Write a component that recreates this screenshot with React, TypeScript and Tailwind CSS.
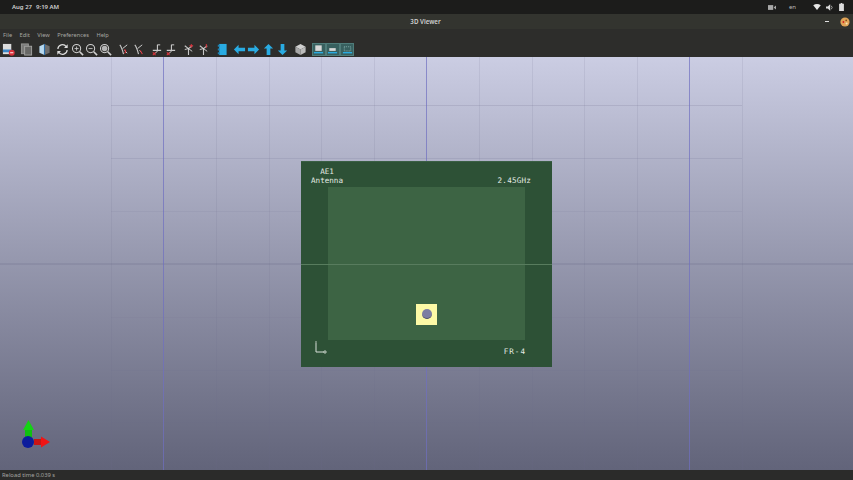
const ROT = (a: string, b: string, red: string) => (
  <>
    <path d={a} stroke="#c8c8c8" strokeWidth="1.2" fill="none" />
    <path d={b} stroke="#e8e8e8" strokeWidth="0.9" fill="none" />
    <path d={red} stroke="#d8303a" strokeWidth="1.1" fill="none" />
  </>
);

function Svg({ children }: { children: React.ReactNode }) {
  return (
    <svg viewBox="0 0 14 14" className="w-[13px] h-[13px]" fill="none">
      {children}
    </svg>
  );
}

const Mag = ({ sign }: { sign: string }) => (
  <Svg>
    <circle cx="6" cy="6" r="4.4" stroke="#d0d0d0" strokeWidth="1.1" />
    <path d="M9.4 9.4L13 13" stroke="#d0d0d0" strokeWidth="1.7" />
    {sign === "fit" ? <circle cx="6" cy="6" r="3" fill="#b5b5b5" /> : null}
    {sign !== "fit" ? <path d="M3.8 6h4.4" stroke="#d0d0d0" strokeWidth="0.9" /> : null}
    {sign === "+" ? <path d="M6 3.8v4.4" stroke="#d0d0d0" strokeWidth="0.9" /> : null}
  </Svg>
);

const Arrow = ({ d }: { d: string }) => (
  <Svg>
    <path d={d} fill="#29abe2" />
  </Svg>
);

const ViewIcon = ({ children }: { children: React.ReactNode }) => (
  <div className="w-[14.3px] h-[13px] bg-[#38605f] border border-[#4f7c7a] flex items-center justify-center shrink-0">
    <svg viewBox="0 0 12 12" className="w-[11px] h-[11px]" fill="none">
      {children}
    </svg>
  </div>
);

function Item({ children }: { children: React.ReactNode }) {
  return <div className="w-[14.3px] h-[14px] flex items-center justify-center shrink-0">{children}</div>;
}

function Group({ children }: { children: React.ReactNode }) {
  return <div className="flex items-center">{children}</div>;
}

function Toolbar() {
  return (
    <div className="h-[15px] bg-[#2d2d2b] flex items-center gap-[3.9px] pl-[1px] pb-[1px]">
      <Group>
        <Item>
          <Svg>
            <rect x="1" y="1" width="9" height="11" fill="#dcdcdc" />
            <rect x="1" y="7" width="9" height="3" fill="#3a86c8" />
            <circle cx="10.5" cy="10.5" r="3.2" fill="#d8303a" />
            <path d="M8.8 10.5h3.4" stroke="#fff" strokeWidth="1" />
          </Svg>
        </Item>
      </Group>
      <Group>
        <Item>
          <Svg>
            <rect x="1.5" y="1" width="7.5" height="10.5" fill="#7a7a78" stroke="#989896" />
            <rect x="5" y="3.5" width="7.5" height="9.5" fill="#686866" stroke="#a4a4a2" />
          </Svg>
        </Item>
      </Group>
      <Group>
        <Item>
          <Svg>
            <path d="M7 1L1.5 3.5v7L7 13z" fill="#b8d8ee" />
            <path d="M7 1l5.5 2.5v7L7 13z" fill="#6d6d6d" />
            <path d="M7 1v12" stroke="#2c6ca8" strokeWidth="1.2" />
          </Svg>
        </Item>
      </Group>
      <Group>
        <Item>
          <Svg>
            <path d="M2 6.5A5 5 0 0 1 11 3.8" stroke="#dcdcdc" strokeWidth="1.3" />
            <path d="M12.6 1.4v4h-4z" fill="#dcdcdc" />
            <path d="M12 7.5A5 5 0 0 1 3 10.2" stroke="#dcdcdc" strokeWidth="1.3" />
            <path d="M1.4 12.6v-4h4z" fill="#dcdcdc" />
          </Svg>
        </Item>
        <Item><Mag sign="+" /></Item>
        <Item><Mag sign="-" /></Item>
        <Item><Mag sign="fit" /></Item>
      </Group>
      <Group>
        <Item>
          <Svg>{ROT("M3 2c2 2 3 6 4 10", "M6 6l5-4M8 8l3 3", "M8 7c2 1 2 3 0 4")}</Svg>
        </Item>
        <Item>
          <Svg>{ROT("M3 2c2 2 3 6 4 10", "M6 6l5-4M8 8l3 3", "M9 8l2 4")}</Svg>
        </Item>
      </Group>
      <Group>
        <Item>
          <Svg>{ROT("M8 2v7M3 8h9", "M8 9l-4 3M8 2l3 0", "M3 10l3 3M3 13l3-3")}</Svg>
        </Item>
        <Item>
          <Svg>{ROT("M8 2v7M3 8h9", "M8 9l-4 3M8 2l3 0", "M3 10l3 3M3 13l3-3")}</Svg>
        </Item>
      </Group>
      <Group>
        <Item>
          <Svg>{ROT("M7 6v7M3 3l4 3 4-3", "M3 7l4-1 4 3", "M10 1v4M8 3h4")}</Svg>
        </Item>
        <Item>
          <Svg>{ROT("M7 6v7M3 3l4 3 4-3", "M3 7l4-1 4 3", "M10 1v4")}</Svg>
        </Item>
      </Group>
      <Group>
        <Item>
          <Svg>
            <rect x="4.5" y="1" width="8" height="12" fill="#29abe2" />
            <path d="M3 2h2v2H3zM3 6h2v2H3zM3 10h2v2H3z" fill="#1d7fb0" />
          </Svg>
        </Item>
      </Group>
      <Group>
        <Item><Arrow d="M1 7l5-5v3h7v4H6v3z" /></Item>
        <Item><Arrow d="M13 7L8 2v3H1v4h7v3z" /></Item>
        <Item><Arrow d="M7 1l5 5H9v7H5V6H2z" /></Item>
        <Item><Arrow d="M7 13l5-5H9V1H5v7H2z" /></Item>
      </Group>
      <Group>
        <Item>
          <Svg>
            <path d="M7 1l5.5 3L7 7 1.5 4z" fill="#d0d0d0" />
            <path d="M1.5 4L7 7v6l-5.5-3z" fill="#a8a8a8" />
            <path d="M12.5 4L7 7v6l5.5-3z" fill="#bcbcbc" />
          </Svg>
        </Item>
      </Group>
      <Group>
        <ViewIcon>
          <rect x="2.5" y="1.5" width="7" height="6" fill="#d8d8d8" />
          <path d="M1 9.5h10" stroke="#29abe2" strokeWidth="1.5" />
        </ViewIcon>
        <ViewIcon>
          <rect x="2.5" y="4.5" width="7" height="3" fill="#d8d8d8" />
          <path d="M1 9.5h10" stroke="#29abe2" strokeWidth="1.5" />
        </ViewIcon>
        <ViewIcon>
          <rect x="2.5" y="3" width="7" height="4.5" stroke="#9ac4c4" strokeWidth="0.8" strokeDasharray="1 1" />
          <path d="M1 9.5h10" stroke="#29abe2" strokeWidth="1.5" />
        </ViewIcon>
      </Group>
    </div>
  );
}

const VX = [111, 216, 269, 321, 374, 479, 532, 584, 637, 742];
const HY: [number, number][] = [
  [105, 0.2],
  [158, 0.16],
  [211, 0.1],
  [317, 0.06],
  [370, 0.06],
  [422, 0.06],
];

function Grid() {
  return (
    <svg className="absolute left-0 top-0 w-[853px] h-[413px]" viewBox="0 57 853 413">
      {VX.map((x) => (
        <path key={x} d={`M${x + 0.5} 57V470`} stroke="#6c6c8c" strokeOpacity="0.13" />
      ))}
      {HY.map(([y, o]) => (
        <path key={y} d={`M111 ${y + 0.5}H742`} stroke="#6c6c8c" strokeOpacity={o} />
      ))}
      <path d="M0 264H853" stroke="#55557c" strokeOpacity="0.3" />
      {[163, 426, 689].map((x) => (
        <path key={x} d={`M${x + 0.5} 57V470`} stroke="#6f6fc0" strokeOpacity="0.7" />
      ))}
    </svg>
  );
}

function Axes() {
  return (
    <svg className="absolute left-[16px] top-[362px] w-[40px] h-[36px]" viewBox="0 0 40 36">
      <rect x="9" y="10" width="7" height="12" fill="#10c010" />
      <path d="M12.5 1L18 11H7z" fill="#14d414" />
      <rect x="18" y="20" width="11" height="6" fill="#c81414" />
      <path d="M34 23l-9-5.5v11z" fill="#f01414" />
      <circle cx="12" cy="23" r="6" fill="#0c1c9c" />
    </svg>
  );
}

function Board() {
  return (
    <div className="relative w-[251px] h-[206px] bg-[#2d5136] pt-[25px] px-[27px] pb-[27px] border-t border-[#3a5f44] font-['DejaVu_Sans_Mono',monospace] text-[7.6px] leading-[9px] text-[#e4ebe4]">
      <div className="w-full h-full bg-[#3d6444] flex items-end justify-center pb-[15px]">
        <div className="w-[21px] h-[21px] bg-[#fdf9a6] flex items-center justify-center">
          <div className="w-[10px] h-[10px] rounded-full bg-[#7d7da2] border-b border-[#4c4c66]" />
        </div>
      </div>
      <div className="absolute left-[10px] top-[5px] w-[32px] flex flex-col items-center">
        <span>AE1</span>
        <span>Antenna</span>
      </div>
      <div className="absolute right-[21px] top-[14px] tracking-[0.2px]">2.45GHz</div>
      <div className="absolute right-[26px] bottom-[11px] tracking-[1px]">FR-4</div>
      <svg className="absolute left-[13px] top-[179px] w-[14px] h-[14px]" viewBox="0 0 14 14" fill="none">
        <path d="M2 2v9h8" stroke="#d8e0d8" strokeWidth="1" />
        <path d="M1 1h2M10 10h2v2h-2z" stroke="#d8e0d8" strokeWidth="0.8" />
      </svg>
      <div className="absolute left-0 right-0 top-[102px] h-px bg-[#587c5e]" />
    </div>
  );
}

export default function App() {
  return (
    <div className="w-[853px] h-[480px] flex flex-col overflow-hidden font-['Noto_Sans',sans-serif] bg-[#2d2d2b]">
      <div className="h-[14px] bg-[#1c1c1b] flex items-center justify-between text-[6px] text-[#d0d0d0] pl-[12px] pr-[9px]">
        <div className="flex gap-[4px] font-semibold">
          <span>Aug 27</span>
          <span>9:19 AM</span>
        </div>
        <div className="flex items-center">
          <svg viewBox="0 0 10 8" className="w-[8px] h-[7px] mr-[13px]">
            <rect x="0" y="1" width="6.5" height="6" fill="#a8a8a8" />
            <path d="M7 4l3-2.5v5z" fill="#a8a8a8" />
          </svg>
          <span className="mr-[17px] text-[#bdbdbd]">en</span>
          <svg viewBox="0 0 10 8" className="w-[8px] h-[6px] mr-[5px]">
            <path d="M0 1.5C3 -.5 7 -.5 10 1.5L5 8z" fill="#e6e6e6" />
          </svg>
          <svg viewBox="0 0 10 10" className="w-[7px] h-[7px] mr-[6px]">
            <path d="M0 3.5h2.5L6 .5v9L2.5 6.5H0z" fill="#dcdcdc" />
            <path d="M7.5 2.5a3.5 3.5 0 0 1 0 5" stroke="#dcdcdc" fill="none" />
          </svg>
          <svg viewBox="0 0 6 10" className="w-[5px] h-[8px]">
            <path d="M2 0h2v1h2v9H0V1h2z" fill="#dcdcdc" />
          </svg>
        </div>
      </div>

      <div className="h-[15px] bg-[#33342f] flex items-center pl-[12px] pr-[3px]">
        <div className="flex-1 text-center text-[6.2px] font-semibold text-[#d0d0d0] pl-[14px]">3D Viewer</div>
        <div className="w-[4px] h-px bg-[#e0e0e0] mr-[11px]" />
        <svg viewBox="0 0 10 10" className="w-[10px] h-[10px]">
          <circle cx="5" cy="5" r="4.6" fill="#e0a458" />
          <circle cx="3.4" cy="5" r="0.9" fill="#d02020" />
          <circle cx="6.2" cy="3.4" r="0.8" fill="#7a4a14" />
          <circle cx="6.6" cy="6.6" r="1" fill="#f8e8b8" />
        </svg>
      </div>

      <div className="h-[13px] bg-[#2d2d2b] flex items-center gap-[7.5px] pl-[3px] text-[5.7px] text-[#a6a6a2]">
        <span>File</span>
        <span>Edit</span>
        <span>View</span>
        <span>Preferences</span>
        <span>Help</span>
      </div>

      <Toolbar />

      <div className="relative flex-1 flex items-center justify-center bg-gradient-to-b from-[#cbcde3] to-[#62647a]">
        <Grid />
        <Board />
        <Axes />
      </div>

      <div className="h-[10px] bg-[#2b2b2a] flex items-center pl-[2px] text-[5.8px] text-[#a4a4a0]">
        Reload time 0.039 s
      </div>
    </div>
  );
}
